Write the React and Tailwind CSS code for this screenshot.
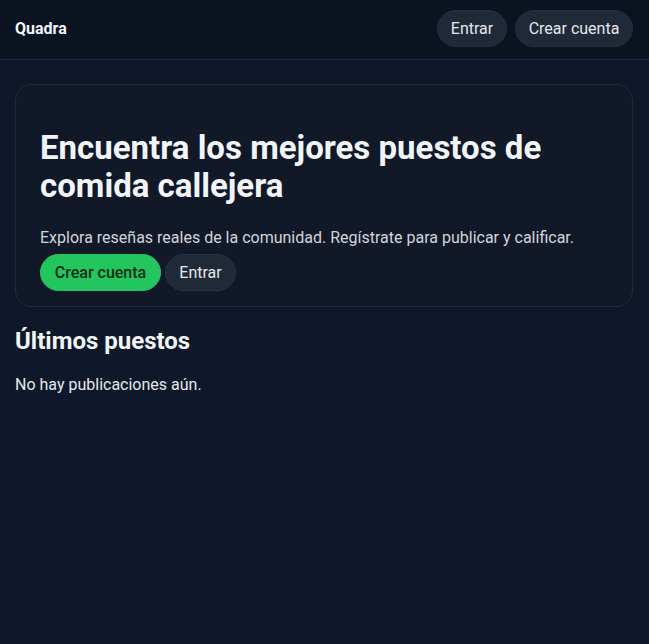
export default function App() {
  return (
    <div className="min-h-screen bg-[#0f172a] text-[#e5e7eb] font-['Roboto',sans-serif]">
      <header className="flex items-center justify-between border-b border-[#1e293b] bg-[#0b1220] pl-[15px] pr-4 pt-[10px] pb-3">
        <span className="text-[16px] font-bold text-[#f1f5f9]">Quadra</span>
        <nav className="flex gap-2">
          <button className="h-[37px] w-[70px] rounded-full border border-[#243041] bg-[#1f2937] text-[16px] text-[#e5e7eb]">Entrar</button>
          <button className="h-[37px] w-[118px] rounded-full border border-[#243041] bg-[#1f2937] text-[16px] text-[#e5e7eb]">Crear cuenta</button>
        </nav>
      </header>

      <main className="pl-[15px] pr-4 pt-6">
        <section className="rounded-2xl border border-[#1e293b] bg-[#111827] px-6 pt-[44px] pb-[15px]">
          <h1 className="text-[33px] font-bold leading-[38px] text-[#f1f5f9]">
            Encuentra los mejores puestos de comida callejera
          </h1>
          <p className="mt-[21px] text-[16px] leading-6 text-[#d1d5db]">
            Explora reseñas reales de la comunidad. Regístrate para publicar y calificar.
          </p>
          <div className="mt-1 flex gap-1">
            <button className="h-[37px] w-[121px] rounded-full border border-[#22c55e] bg-[#22c55e] text-[16px] font-medium text-[#052e16]">Crear cuenta</button>
            <button className="h-[37px] w-[71px] rounded-full border border-[#273244] bg-[#1f2937] text-[16px] text-[#e5e7eb]">Entrar</button>
          </div>
        </section>

        <h2 className="mt-[18px] text-[24px] font-bold leading-8 text-[#f1f5f9]">Últimos puestos</h2>
        <p className="mt-4 text-[16px] leading-6 text-[#e5e7eb]">No hay publicaciones aún.</p>
      </main>
    </div>
  );
}
